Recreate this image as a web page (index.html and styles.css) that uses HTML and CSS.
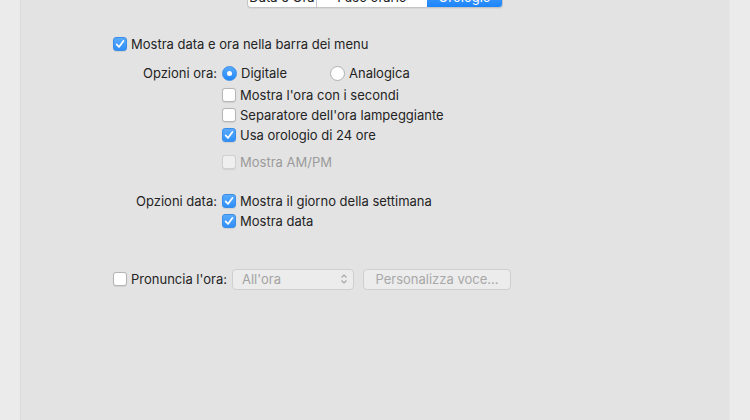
FILE: index.html
```html
<!DOCTYPE html>
<html>
<head>
<meta charset="utf-8">
<link rel="stylesheet" href="styles.css">
</head>
<body>
<div class="panel">
  <div class="seg">
    <div class="seg-item s1">Data e Ora</div>
    <div class="seg-item s2">Fuso orario</div>
    <div class="seg-item s3 active">Orologio</div>
  </div>

  <div class="content">
    <label class="row top">
      <span class="cb checked"><svg viewBox="0 0 14 14"><path d="M3.6 7.4 L6 9.9 L10.4 4" /></svg></span>
      <span>Mostra data e ora nella barra dei menu</span>
    </label>

    <div class="grid ora">
      <div class="lbl">Opzioni ora:</div>
      <div class="radios">
        <span class="opt dig"><span class="radio on"></span>Digitale</span>
        <span class="opt"><span class="radio"></span>Analogica</span>
      </div>
      <div></div>
      <div class="stack">
        <label class="row"><span class="cb"></span><span>Mostra l'ora con i secondi</span></label>
        <label class="row"><span class="cb"></span><span>Separatore dell'ora lampeggiante</span></label>
        <label class="row"><span class="cb checked"><svg viewBox="0 0 14 14"><path d="M3.6 7.4 L6 9.9 L10.4 4" /></svg></span><span>Usa orologio di 24 ore</span></label>
        <label class="row disabled gapped"><span class="cb dis"></span><span>Mostra AM/PM</span></label>
      </div>
    </div>

    <div class="grid data">
      <div class="lbl">Opzioni data:</div>
      <div class="stack">
        <label class="row"><span class="cb checked"><svg viewBox="0 0 14 14"><path d="M3.6 7.4 L6 9.9 L10.4 4" /></svg></span><span>Mostra il giorno della settimana</span></label>
        <label class="row"><span class="cb checked"><svg viewBox="0 0 14 14"><path d="M3.6 7.4 L6 9.9 L10.4 4" /></svg></span><span>Mostra data</span></label>
      </div>
    </div>

    <div class="speak">
      <label class="row speak-lbl"><span class="cb"></span><span>Pronuncia l'ora:</span></label>
      <div class="popup"><span>All'ora</span>
        <svg class="chev" viewBox="0 0 8 12"><path d="M1.5 4.5 L4 2 L6.5 4.5 M1.5 7.5 L4 10 L6.5 7.5"/></svg>
      </div>
      <div class="btn">Personalizza voce...</div>
    </div>
  </div>
</div>
</body>
</html>
```

FILE: styles.css
```css
html, body {
  margin: 0;
  padding: 0;
}
body {
  background: #ebebeb;
  font-family: "Inter", "Liberation Sans", sans-serif;
  font-size: 13px;
  color: #232323;
  width: 750px;
  height: 420px;
  overflow: hidden;
}
.panel {
  display: flow-root;
  margin: 0 20px;
  height: 420px;
  background: #e3e3e3;
  border-left: 1px solid #dadada;
  border-right: 1px solid #e6e6e6;
  box-sizing: border-box;
}
.seg {
  display: flex;
  width: 256px;
  margin: -13px auto 0;
  height: 21px;
  box-sizing: border-box;
  border: 1px solid #c5c5c5;
  border-top: none;
  border-radius: 4px;
  background: #fff;
  overflow: hidden;
  box-shadow: 0 1px 0 rgba(0,0,0,0.05);
}
.seg-item {
  display: flex;
  align-items: center;
  justify-content: center;
  height: 100%;
  font-size: 13px;
  color: #222;
}
.s1 { width: 68px; border-right: 1px solid #c8c8c8; }
.s2 { width: 110px; }
.s3 { flex: 1; }
.seg-item.active {
  background: linear-gradient(#58a9fb, #1c84fb);
  color: #fff;
}
.content {
  padding-left: 92px;
  padding-top: 26px;
}
.row {
  display: flex;
  align-items: center;
  height: 20px;
  gap: 4px;
}
.cb {
  width: 14px;
  height: 14px;
  box-sizing: border-box;
  border: 1px solid #b5b5b5;
  border-radius: 3px;
  background: #fff;
  display: inline-flex;
  flex: none;
  box-shadow: 0 0.5px 1px rgba(0,0,0,0.08);
}
.cb.checked {
  background: linear-gradient(#5aaafc, #2f8ff9);
  border-color: #3a8ee8;
}
.cb svg {
  width: 14px;
  height: 14px;
  margin: -1px;
}
.cb svg path {
  fill: none;
  stroke: #fff;
  stroke-width: 1.7;
  stroke-linecap: round;
  stroke-linejoin: round;
}
.cb.dis {
  border-color: #d0d0d0;
  background: #efefef;
}
.disabled { color: #9b9b9b; }
.grid {
  display: grid;
  grid-template-columns: 104px auto;
  column-gap: 5px;
}
.ora { margin-top: 9px; }
.lbl {
  text-align: right;
  height: 20px;
  line-height: 20px;
}
.radios {
  display: flex;
  align-items: center;
  height: 20px;
  margin-bottom: 2px;
}
.opt {
  display: inline-flex;
  align-items: center;
  gap: 4px;
}
.dig { width: 108px; }
.radio {
  width: 15px;
  height: 15px;
  box-sizing: border-box;
  border-radius: 50%;
  border: 1px solid #b0b0b0;
  background: #fff;
  display: inline-block;
  position: relative;
  flex: none;
}
.radio.on {
  background: linear-gradient(#58a9fb, #2188fb);
  border-color: #3a8ee8;
}
.radio.on::after {
  content: "";
  position: absolute;
  width: 5px;
  height: 5px;
  border-radius: 50%;
  background: #fff;
  left: 4px;
  top: 4px;
}
.stack {
  display: flex;
  flex-direction: column;
}
.gapped { margin-top: 7px; }
.data { margin-top: 19px; }
.speak {
  display: flex;
  align-items: center;
  margin-top: 37px;
  height: 22px;
}
.speak-lbl { width: 119px; }
.popup {
  width: 122px;
  height: 21px;
  box-sizing: border-box;
  border: 1px solid #cfcfcf;
  border-radius: 4px;
  background: #ececec;
  color: #a3a3a3;
  display: flex;
  align-items: center;
  justify-content: space-between;
  padding: 0 5px 0 9px;
}
.chev {
  width: 8px;
  height: 12px;
}
.chev path {
  fill: none;
  stroke: #a8a8a8;
  stroke-width: 1.2;
}
.btn {
  margin-left: 9px;
  width: 148px;
  height: 21px;
  box-sizing: border-box;
  border: 1px solid #cfcfcf;
  border-radius: 4px;
  background: #ececec;
  color: #a8a8a8;
  display: flex;
  align-items: center;
  justify-content: center;
}
```
